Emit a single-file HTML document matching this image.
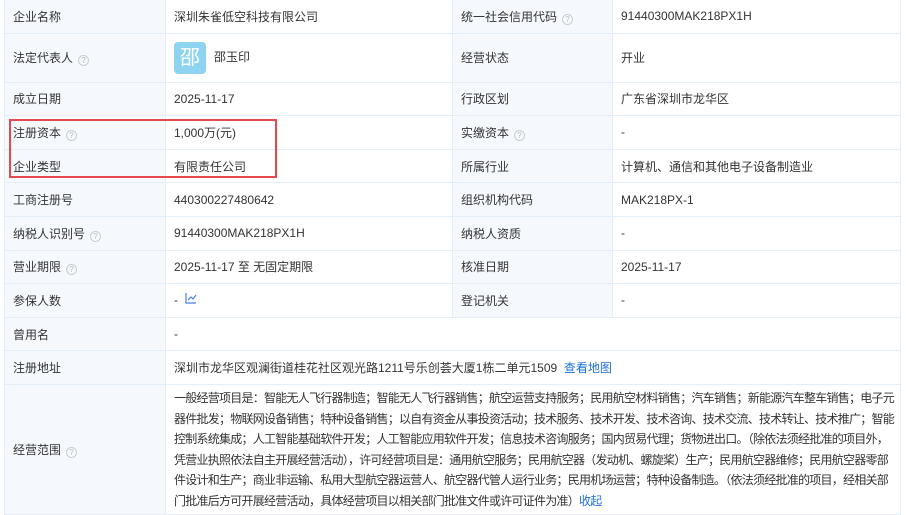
<!DOCTYPE html>
<html><head><meta charset="utf-8"><style>
*{margin:0;padding:0;box-sizing:border-box}
body{width:906px;height:506px;overflow:hidden;background:#fff;font-family:"Liberation Sans","Noto Sans CJK SC",sans-serif;font-size:12px;color:#333;position:relative}
table{position:absolute;left:4px;top:-1px;width:896px;border-collapse:collapse;table-layout:fixed}
td{border:1px solid #e4eef9;padding:0 8px;height:33.6px;vertical-align:middle;white-space:nowrap}
td.l{background:#f5f9fe;color:#333;padding-left:8px}
.q{display:inline-block;width:11px;height:11px;border:1px solid #ccc;border-radius:50%;color:#bbb;font-size:8px;line-height:9px;text-align:center;vertical-align:-1px;margin-left:5px}
.av{display:inline-block;width:32px;height:32px;background:#8ed4f1;border-radius:4px;color:#fff;font-size:20px;line-height:32px;text-align:center;vertical-align:middle;margin-right:8px}
a{color:#1e6fd9;text-decoration:none}
.scope{white-space:nowrap;overflow:hidden;line-height:20.6px;padding:3px 0 0 8px;vertical-align:top;letter-spacing:-0.75px}
.red{position:absolute;left:9px;top:119px;width:268px;height:59px;border:2px solid #e5484d}
</style></head><body>
<table>
<colgroup><col style="width:161px"><col style="width:287px"><col style="width:160px"><col style="width:288px"></colgroup>
<tr style="height:33px"><td class="l">企业名称</td><td>深圳朱雀低空科技有限公司</td><td class="l">统一社会信用代码<span class="q">?</span></td><td>91440300MAK218PX1H</td></tr>
<tr style="height:49px"><td class="l">法定代表人<span class="q">?</span></td><td><span class="av">邵</span>邵玉印</td><td class="l">经营状态</td><td>开业</td></tr>
<tr><td class="l">成立日期</td><td>2025-11-17</td><td class="l">行政区划</td><td>广东省深圳市龙华区</td></tr>
<tr><td class="l">注册资本<span class="q">?</span></td><td>1,000万(元)</td><td class="l">实缴资本<span class="q">?</span></td><td>-</td></tr>
<tr><td class="l">企业类型</td><td>有限责任公司</td><td class="l">所属行业</td><td>计算机、通信和其他电子设备制造业</td></tr>
<tr><td class="l">工商注册号</td><td>440300227480642</td><td class="l">组织机构代码</td><td>MAK218PX-1</td></tr>
<tr><td class="l">纳税人识别号<span class="q">?</span></td><td>91440300MAK218PX1H</td><td class="l">纳税人资质</td><td>-</td></tr>
<tr><td class="l">营业期限<span class="q">?</span></td><td>2025-11-17 至 无固定期限</td><td class="l">核准日期</td><td>2025-11-17</td></tr>
<tr><td class="l">参保人数</td><td>- &nbsp;<svg width="12" height="11" viewBox="0 0 12 11" style="vertical-align:0"><path d="M1 0V10H11" fill="none" stroke="#4a7fe0" stroke-width="1.2"/><path d="M3 7L6 4L8 6L11 2" fill="none" stroke="#4a7fe0" stroke-width="1.2"/></svg></td><td class="l">登记机关</td><td>-</td></tr>
<tr><td class="l">曾用名</td><td colspan="3">-</td></tr>
<tr><td class="l">注册地址</td><td colspan="3">深圳市龙华区观澜街道桂花社区观光路1211号乐创荟大厦1栋二单元1509 &nbsp;<a>查看地图</a></td></tr>
<tr style="height:130px"><td class="l" style="vertical-align:middle;padding-top:0">经营范围<span class="q">?</span></td><td colspan="3" class="scope">一般经营项目是：智能无人飞行器制造；智能无人飞行器销售；航空运营支持服务；民用航空材料销售；汽车销售；新能源汽车整车销售；电子元<br>器件批发；物联网设备销售；特种设备销售；以自有资金从事投资活动；技术服务、技术开发、技术咨询、技术交流、技术转让、技术推广；智能<br>控制系统集成；人工智能基础软件开发；人工智能应用软件开发；信息技术咨询服务；国内贸易代理；货物进出口。（除依法须经批准的项目外，<br>凭营业执照依法自主开展经营活动），许可经营项目是：通用航空服务；民用航空器（发动机、螺旋桨）生产；民用航空器维修；民用航空器零部<br>件设计和生产；商业非运输、私用大型航空器运营人、航空器代管人运行业务；民用机场运营；特种设备制造。（依法须经批准的项目，经相关部<br>门批准后方可开展经营活动，具体经营项目以相关部门批准文件或许可证件为准）<a>收起</a></td></tr>
</table>
<div class="red"></div>
</body></html>
